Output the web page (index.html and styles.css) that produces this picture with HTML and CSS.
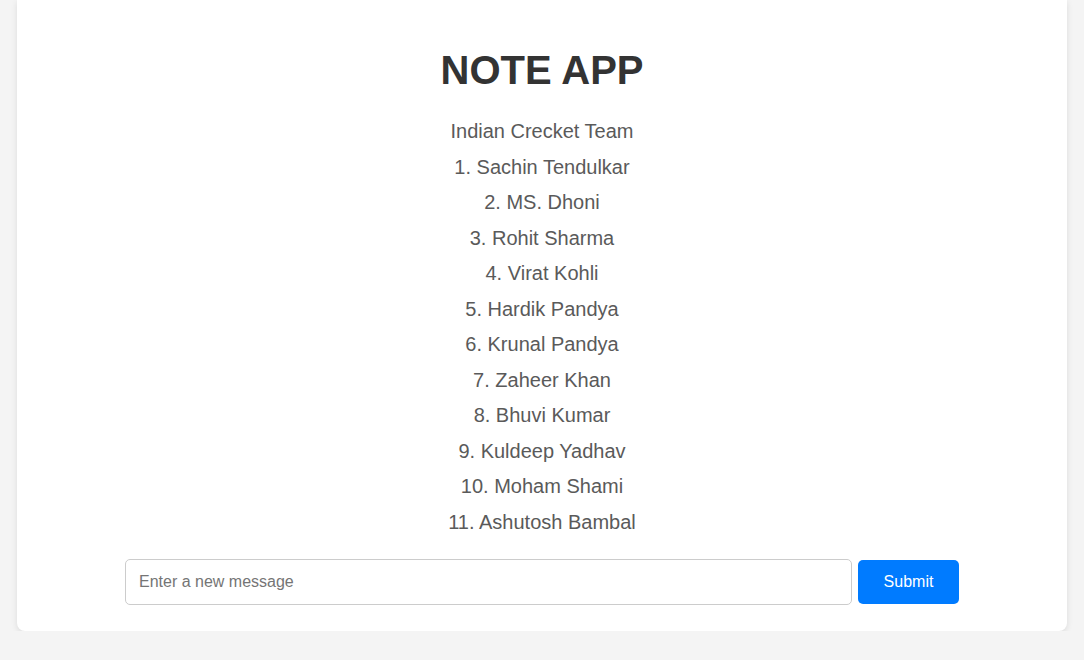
FILE: index.html
```html
<!DOCTYPE html>
<html lang="en">
<head>
    <meta charset="UTF-8">
    <meta name="viewport" content="width=device-width, initial-scale=1.0">
    <title>Note App</title>
    <link rel="stylesheet" href="styles.css">
</head>
<body>
    <div class="container">
        <h1>NOTE APP</h1>

        <div class="notes">
            <p>Indian Crecket Team</p>
            <p>1. Sachin Tendulkar</p>
            <p>2. MS. Dhoni</p>
            <p>3. Rohit Sharma</p>
            <p>4. Virat Kohli</p>
            <p>5. Hardik Pandya</p>
            <p>6. Krunal Pandya</p>
            <p>7. Zaheer Khan</p>
            <p>8. Bhuvi Kumar</p>
            <p>9. Kuldeep Yadhav</p>
            <p>10. Moham Shami</p>
            <p>11. Ashutosh Bambal</p>
        </div>

        <form class="note-form">
            <input type="text" placeholder="Enter a new message">
            <button type="button">Submit</button>
        </form>
    </div>
</body>
</html>
```

FILE: styles.css
```css
body {
    font-family: "Liberation Sans", Arial, sans-serif;
    margin: 0;
    background: #f4f4f4;
}

.container {
    margin: 0 17px;
    background: white;
    border-radius: 0 0 8px 8px;
    box-shadow: 0 2px 6px rgba(0,0,0,0.1);
    padding: 48px 20px 26px;
    text-align: center;
}

h1 {
    color: #333;
    font-size: 40px;
    margin: 0 0 21px;
}

.notes p {
    color: #5a5a5a;
    font-size: 20px;
    line-height: 35.5px;
    margin: 0;
}

.note-form {
    display: flex;
    align-items: center;
    width: 834px;
    margin: 19px auto 0;
}

.note-form input {
    flex: 1;
    height: 46px;
    box-sizing: border-box;
    border: 1px solid #ccc;
    border-radius: 5px;
    padding: 0 13px;
    font-family: inherit;
    font-size: 16px;
    color: #333;
}

.note-form input::placeholder {
    color: #757575;
}

.note-form button {
    width: 101px;
    height: 44px;
    margin-left: 6px;
    background: #007bff;
    color: white;
    border: none;
    border-radius: 5px;
    font-family: inherit;
    font-size: 16px;
    cursor: pointer;
}

.note-form button:hover {
    background: #0069d9;
}
```
